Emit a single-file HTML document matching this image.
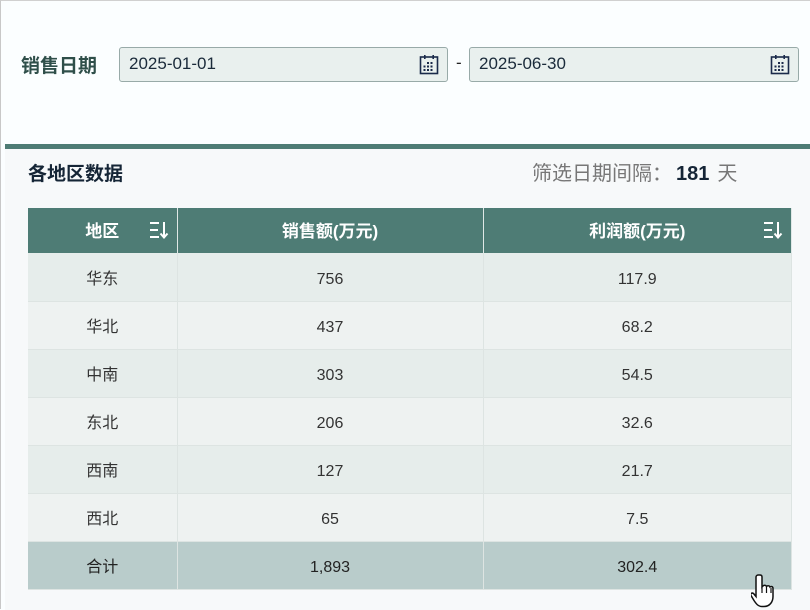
<!DOCTYPE html><html><head><meta charset="utf-8"><style>
*{margin:0;padding:0;box-sizing:border-box}
body{width:810px;height:609px;overflow:hidden;background:#fbfeff;font-family:"Liberation Sans","Noto Sans CJK SC",sans-serif;position:relative;border-left:1px solid #c8c8c8;border-top:1px solid #d0d0d0}
.lbl{position:absolute;left:20px;top:50px;font-size:19px;font-weight:bold;color:#2f4f4a}
.inp{position:absolute;top:46px;height:35px;background:#e9f0ee;border:1px solid #98aaa8;border-radius:3px;font-size:17px;line-height:31px;color:#1a2a3a;padding:0 9px}
.cal{position:absolute;right:8px;top:6px}
.dash{position:absolute;left:455px;top:52px;font-size:17px;color:#222}
.panel{position:absolute;left:4px;top:143px;width:806px;height:466px;background:#f7f9fa;border-top:5px solid #4e7c75}
.title{position:absolute;left:23px;top:10px;font-size:19px;font-weight:bold;color:#152536}
.gap{position:absolute;left:527px;top:8px;font-size:20px;color:#777}
.gap b{color:#152536;margin:0 8px 0 4px}
table{position:absolute;left:23px;top:59px;width:764px;border-collapse:collapse;font-size:16px;color:#333}
th{background:#4e7c75;color:#fff;height:45px;font-size:17px;font-weight:bold;border-right:1px solid #e0e8e6;position:relative;line-height:20px;padding-top:2px}
td{height:48px;text-align:center;border-right:1px solid #dde4e2;border-bottom:1px solid #dde4e2;line-height:20px;padding-top:6px}
tr.a td{background:#e6edeb}tr.b td{background:#eef2f1}tr.t td{background:#b9cccb;color:#222}
.s{position:absolute;right:8px;top:13px}
</style></head><body>
<div class="lbl">销售日期</div>
<div class="inp" style="left:118px;width:329px">2025-01-01<svg class="cal" width="20" height="21" viewBox="0 0 20 21"><rect x="1.5" y="3" width="17" height="16.5" fill="none" stroke="#1a2a4a" stroke-width="1.6"/><rect x="5" y="1" width="1.6" height="4" fill="#1a2a4a"/><rect x="13.4" y="1" width="1.6" height="4" fill="#1a2a4a"/><g fill="#1a2a4a"><rect x="8" y="8" width="2" height="2"/><rect x="11.5" y="8" width="2" height="2"/><rect x="4.5" y="11.5" width="2" height="2"/><rect x="8" y="11.5" width="2" height="2"/><rect x="11.5" y="11.5" width="2" height="2"/><rect x="4.5" y="15" width="2" height="2"/><rect x="8" y="15" width="2" height="2"/><rect x="11.5" y="15" width="2" height="2"/></g></svg></div>
<div class="dash">-</div>
<div class="inp" style="left:468px;width:330px">2025-06-30<svg class="cal" width="20" height="21" viewBox="0 0 20 21"><rect x="1.5" y="3" width="17" height="16.5" fill="none" stroke="#1a2a4a" stroke-width="1.6"/><rect x="5" y="1" width="1.6" height="4" fill="#1a2a4a"/><rect x="13.4" y="1" width="1.6" height="4" fill="#1a2a4a"/><g fill="#1a2a4a"><rect x="8" y="8" width="2" height="2"/><rect x="11.5" y="8" width="2" height="2"/><rect x="4.5" y="11.5" width="2" height="2"/><rect x="8" y="11.5" width="2" height="2"/><rect x="11.5" y="11.5" width="2" height="2"/><rect x="4.5" y="15" width="2" height="2"/><rect x="8" y="15" width="2" height="2"/><rect x="11.5" y="15" width="2" height="2"/></g></svg></div>
<div class="panel">
<div class="title">各地区数据</div>
<div class="gap">筛选日期间隔：<b>181</b>天</div>
<table>
<tr><th style="width:149px">地区<svg class="s" width="20" height="18" viewBox="0 0 20 18"><g stroke="#fff" stroke-width="2" fill="none"><path d="M1 2h9M1 9h8M1 16h9M15 1v15M11.5 12.5l3.5 4 3.5-4"/></g></svg></th><th style="width:306px">销售额(万元)</th><th>利润额(万元)<svg class="s" width="20" height="18" viewBox="0 0 20 18"><g stroke="#fff" stroke-width="2" fill="none"><path d="M1 2h9M1 9h8M1 16h9M15 1v15M11.5 12.5l3.5 4 3.5-4"/></g></svg></th></tr>
<tr class="a"><td>华东</td><td>756</td><td>117.9</td></tr>
<tr class="b"><td>华北</td><td>437</td><td>68.2</td></tr>
<tr class="a"><td>中南</td><td>303</td><td>54.5</td></tr>
<tr class="b"><td>东北</td><td>206</td><td>32.6</td></tr>
<tr class="a"><td>西南</td><td>127</td><td>21.7</td></tr>
<tr class="b"><td>西北</td><td>65</td><td>7.5</td></tr>
<tr class="t"><td>合计</td><td>1,893</td><td>302.4</td></tr>
</table>
</div>
<svg style="position:absolute;left:750px;top:572px" width="28" height="36" viewBox="0 0 28 36"><path d="M9 2c1.5 0 2 1 2 2v10l1-1c1-1 3-1 3.5 0.5 1-1 3-1 3.5 0.5 1-1 3-0.5 3 1.5v8c0 5-3 10-9 10h-2c-4 0-6-3-8-6l-3-5c-1-2 1-3 2.5-2l2.5 3V4c0-1 1-2 2-2z" fill="#fff" stroke="#111" stroke-width="1.5"/><path d="M11 14v6M15.5 14v6M20 15v5" stroke="#111" stroke-width="1.2"/></svg>
</body></html>
